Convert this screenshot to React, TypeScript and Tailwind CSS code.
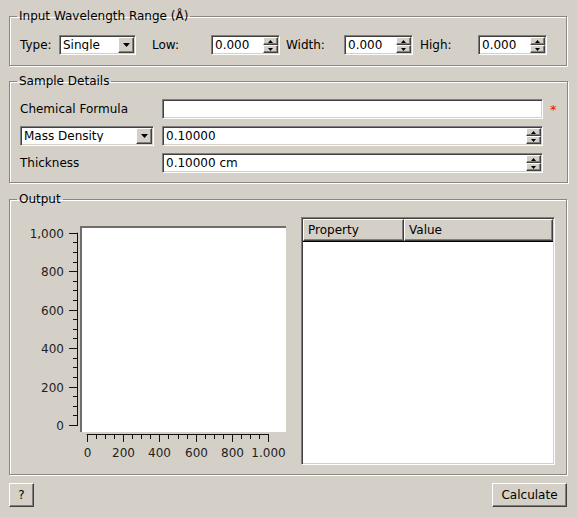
import React from "react";

const sunken =
  "border border-t-[#808080] border-l-[#808080] border-b-white border-r-white shadow-[inset_1px_1px_0_#404040,inset_-1px_-1px_0_#d4d0c8]";
const raised =
  "border border-t-white border-l-white border-b-[#404040] border-r-[#404040] shadow-[inset_-1px_-1px_0_#808080] bg-[#d4d0c8]";

function DownArrow({ w = 7, h = 4 }: { w?: number; h?: number }) {
  return (
    <svg width={w} height={h} viewBox={`0 0 ${w} ${h}`}>
      <path d={`M0 0H${w}L${w / 2} ${h}Z`} fill="#000" />
    </svg>
  );
}

function UpArrow({ w = 5, h = 3 }: { w?: number; h?: number }) {
  return (
    <svg width={w} height={h} viewBox={`0 0 ${w} ${h}`}>
      <path d={`M0 ${h}H${w}L${w / 2} 0Z`} fill="#000" />
    </svg>
  );
}

function Combo({ value, className = "" }: { value: string; className?: string }) {
  return (
    <div className={`flex h-[20px] items-center bg-white ${sunken} ${className}`}>
      <span className="flex-1 truncate pl-[3px] leading-none">{value}</span>
      <div className={`mr-[1px] flex h-[16px] w-[16px] items-center justify-center ${raised}`}>
        <DownArrow />
      </div>
    </div>
  );
}

function Spin({ value, className = "" }: { value: string; className?: string }) {
  return (
    <div className={`flex h-[20px] items-center bg-white ${sunken} ${className}`}>
      <span className="flex-1 truncate pl-[3px] leading-none">{value}</span>
      <div className="mr-[1px] flex flex-col">
        <div className={`flex h-[8px] w-[15px] items-center justify-center ${raised}`}>
          <UpArrow />
        </div>
        <div className={`flex h-[8px] w-[15px] items-center justify-center ${raised}`}>
          <DownArrow w={5} h={3} />
        </div>
      </div>
    </div>
  );
}

function Group({
  title,
  className = "",
  children,
}: {
  title: string;
  className?: string;
  children: React.ReactNode;
}) {
  return (
    <fieldset
      className={`border border-[#8a8782] px-[10px] shadow-[inset_1px_1px_0_#fff,1px_1px_0_#fff] ${className}`}
    >
      <legend className="ml-[-3px] px-[2px] leading-[14px]">{title}</legend>
      {children}
    </fieldset>
  );
}

function Chart() {
  const yTicks = Array.from({ length: 21 }, (_, i) => i);
  const xTicks = Array.from({ length: 21 }, (_, i) => i);
  const y0 = 425;
  const y1 = 232.7;
  const x0 = 86.7;
  const x1 = 268.3;
  const yLabels = ["0", "200", "400", "600", "800", "1,000"];
  const xLabels = ["0", "200", "400", "600", "800", "1.000"];
  return (
    <svg width={271} height={248} viewBox="20 217 271 248" className="shrink-0">
      <rect x={80} y={226} width={206} height={206} fill="#fff" />
      <rect x={80} y={226} width={206} height={2} fill="#6f6e6a" />
      <rect x={80} y={226} width={2} height={206} fill="#6f6e6a" />
      <line x1={77.5} y1={y1} x2={77.5} y2={y0 + 0.5} stroke="#111" />
      {yTicks.map((i) => {
        const y = Math.round(y0 - (i * (y0 - y1)) / 20) + 0.5;
        const major = i % 4 === 0;
        return (
          <line key={i} x1={major ? 69 : 73} y1={y} x2={78} y2={y} stroke="#111" />
        );
      })}
      {yLabels.map((t, k) => {
        const y = Math.round(y0 - (k * 4 * (y0 - y1)) / 20);
        return (
          <text
            key={t}
            x={64}
            y={y + 4.5}
            textAnchor="end"
            fontFamily="DejaVu Sans, sans-serif"
            fontSize={12}
            fill="#1e1e1e"
          >
            {t}
          </text>
        );
      })}
      <line x1={x0} y1={434.5} x2={x1 + 0.5} y2={434.5} stroke="#111" />
      {xTicks.map((i) => {
        const x = Math.round(x0 + (i * (x1 - x0)) / 20) + 0.5;
        const major = i % 4 === 0;
        return (
          <line key={i} x1={x} y1={434} x2={x} y2={major ? 442 : 439} stroke="#111" />
        );
      })}
      {xLabels.map((t, k) => {
        const x = Math.round(x0 + (k * 4 * (x1 - x0)) / 20);
        return (
          <text
            key={t}
            x={x + 0.5}
            y={457}
            textAnchor="middle"
            fontFamily="DejaVu Sans, sans-serif"
            fontSize={12}
            fill="#1e1e1e"
          >
            {t}
          </text>
        );
      })}
    </svg>
  );
}

export default function App() {
  return (
    <div
      className="flex h-[517px] w-[577px] flex-col bg-[#d4d0c8] pl-[9px] pr-[10px] pt-[9px] text-[12px] text-black"
      style={{ fontFamily: '"DejaVu Sans", sans-serif' }}
    >
      <Group title="Input Wavelength Range (Å)" className="pb-[10px] pt-[12px]">
        <div className="flex items-center">
          <span className="w-[39px]">Type:</span>
          <Combo value="Single" className="w-[77px]" />
          <span className="ml-[16px] w-[59px]">Low:</span>
          <Spin value="0.000" className="w-[69px]" />
          <span className="ml-[6px] w-[58px]">Width:</span>
          <Spin value="0.000" className="w-[69px]" />
          <span className="ml-[7px] w-[58px]">High:</span>
          <Spin value="0.000" className="w-[69px]" />
        </div>
      </Group>

      <Group title="Sample Details" className="mt-[8px] pb-[9px] pt-[11px]">
        <div className="grid grid-cols-[142px_381px_1fr] items-center gap-y-[7px]">
          <span>Chemical Formula</span>
          <div className={`h-[20px] bg-white ${sunken}`} />
          <span className="pl-[7px] text-[13px] leading-none text-[#ff0000]">*</span>

          <Combo value="Mass Density" className="mr-[8px]" />
          <Spin value="0.10000" />
          <span />

          <span>Thickness</span>
          <Spin value="0.10000 cm" />
          <span />
        </div>
      </Group>

      <Group title="Output" className="mt-[9px] pb-[9px] pr-[11px] pt-[11px]">
        <div className="flex gap-[10px]">
          <Chart />
          <div className={`flex h-[248px] w-[254px] flex-col bg-white ${sunken} p-[1px]`}>
            <div className="flex h-[23px] border-b border-b-black">
              <div className={`flex w-[101px] items-center pl-[4px] ${raised}`}>Property</div>
              <div className={`flex flex-1 items-center pl-[4px] ${raised}`}>Value</div>
            </div>
          </div>
        </div>
      </Group>

      <div className="mt-[8px] flex justify-between">
        <button className={`flex h-[24px] w-[25px] items-center justify-center ${raised}`}>?</button>
        <button className={`flex h-[24px] w-[75px] items-center justify-center ${raised}`}>
          Calculate
        </button>
      </div>
    </div>
  );
}
